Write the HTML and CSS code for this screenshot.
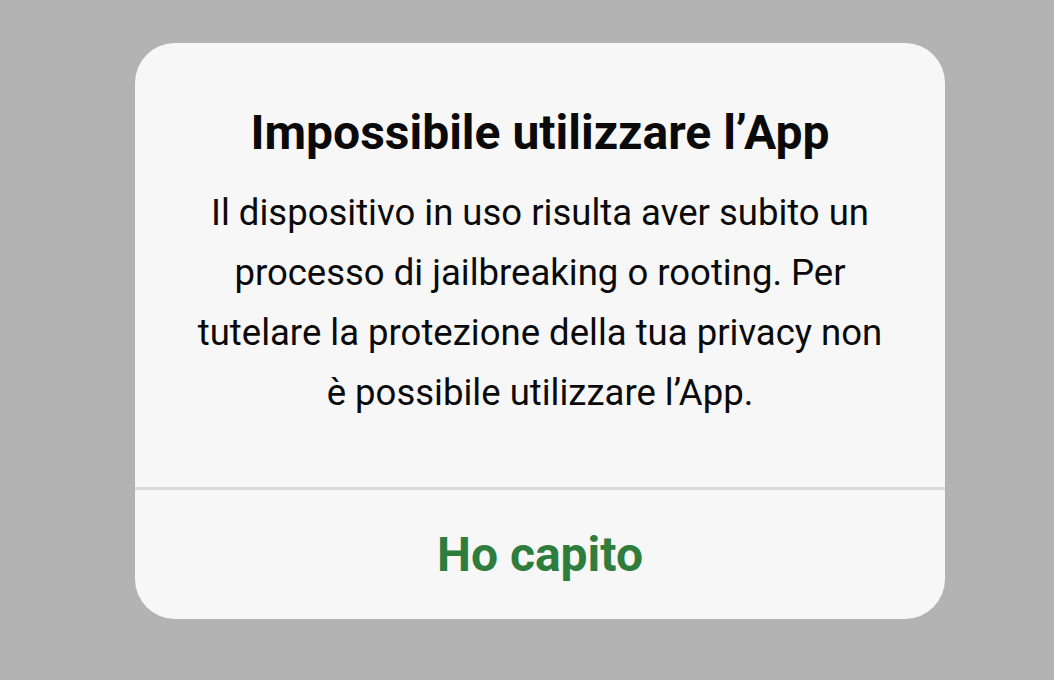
FILE: index.html
```html
<!DOCTYPE html>
<html lang="it">
  <head>
    <meta charset="UTF-8" />
    <meta name="viewport" content="width=device-width, initial-scale=1.0" />
    <title>Impossibile utilizzare l’App</title>
    <link rel="stylesheet" href="styles.css" />
  </head>
  <body>
    <div class="overlay">
      <div class="dialog">
        <div class="dialogBody">
          <h1 class="dialogTitle">Impossibile utilizzare l’App</h1>
          <p class="dialogText">
            Il dispositivo in uso risulta aver subito un processo di jailbreaking o rooting. Per tutelare la protezione della tua privacy non è possibile utilizzare l’App.
          </p>
        </div>
        <button class="dialogButton" type="button">Ho capito</button>
      </div>
    </div>
  </body>
</html>
```

FILE: styles.css
```css
body {
  margin: 0;
  font-family: Roboto, "Noto Sans", sans-serif;
  background-color: #b3b3b3;
}

.overlay {
  height: 680px;
  display: flex;
  justify-content: center;
  padding-top: 43px;
  box-sizing: border-box;
}

.dialog {
  width: 810px;
  height: 576px;
  margin-left: 26px;
  background-color: #f7f7f7;
  border-radius: 40px;
  display: flex;
  flex-direction: column;
  overflow: hidden;
}

.dialogBody {
  flex: 1;
  padding: 62px 55px 0;
  text-align: center;
  border-bottom: 3px solid #dadada;
}

.dialogTitle {
  margin: 0 0 22px;
  font-size: 48px;
  line-height: 56px;
  font-weight: 700;
  color: #0a0a0a;
}

.dialogText {
  margin: 0;
  font-size: 36.5px;
  line-height: 60px;
  color: #0a0a0a;
}

.dialogButton {
  height: 129px;
  border: none;
  background: none;
  font-family: inherit;
  font-size: 48px;
  font-weight: 700;
  color: #2e7d3c;
  cursor: pointer;
}
```
